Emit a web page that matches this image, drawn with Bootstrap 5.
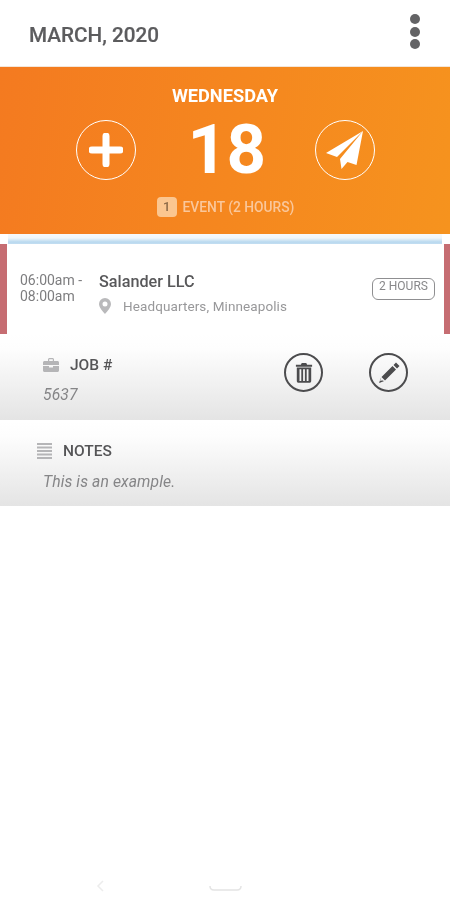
<!DOCTYPE html>
<html lang="en">
<head>
<meta charset="utf-8">
<title>March 2020</title>
<link rel="stylesheet" href="https://cdn.jsdelivr.net/npm/bootstrap@5.3.0/dist/css/bootstrap.min.css">
<style>
html,body{height:900px;overflow:hidden;background:#fff}
body{font-family:Roboto,"Liberation Sans",sans-serif;width:450px;filter:blur(.45px)}
.top-bar{height:67px;padding:0 29px 0 29px;border-bottom:1px solid #f3e6da}
.month{font-size:20.7px;font-weight:500;color:#5c5c5e;line-height:1;margin-top:4px;-webkit-text-stroke:.2px #5c5c5e}
.dots{width:12px;margin-top:0}
.dots i{display:block;width:10px;height:10px;border-radius:50%;background:#636365;margin:0 auto 2.700px}
.hero{height:167px;background:linear-gradient(100deg,#f47a20,#f6931e);color:#fff;padding-top:19px}
.weekday{font-size:18.2px;font-weight:700;line-height:20px}
.day-row{height:72px;margin-top:8px;padding-left:76px;padding-right:75px}
.round{width:60px;height:60px;border:1.5px solid #fff;border-radius:50%}
.daynum{font-size:69px;font-weight:700;line-height:72px;letter-spacing:-.5px;margin:-1px 0 0 2px}
.summary{margin-top:11px;padding-left:1px;gap:6px;font-size:13.800px;font-weight:500;color:#fac79b;line-height:20px}
.count{width:20px;height:20px;border-radius:4px;background:#fbc690;color:#8c6a48;font-size:13px}
.gap-strip{height:10px;background:linear-gradient(#f7f9fa 0,#f0f6fa 40%,#b9d9ef 80%,#c3def1 100%);margin:0 0 0 8px;width:434px}
.event{height:90px;border-left:7px solid #c66d72;border-right:6px solid #c66d72;color:#6f6f71}
.times{width:92px;padding:0 12px 0 13px;flex:none;font-size:14px;line-height:16px;color:#7d7d7f;margin-top:-3px}
.who{font-size:16.200px;font-weight:500;line-height:20px;color:#58585a;margin-bottom:4px}
.where{font-size:13.500px;color:#98989a;line-height:20px;gap:12px;letter-spacing:.1px}
.tag{flex:none;width:63px;height:22px;border:1.5px solid #8f8f91;border-radius:6px;font-size:12px;line-height:15px;color:#88888a;text-align:center;margin:-1px 9px 0 0}
.event-body{padding-top:9px}
.info{background:linear-gradient(#fff 0,#fdfdfd 18%,#e4e4e4 100%)}
.job{height:86px;padding:21px 0 0 43px;margin-bottom:1px}
.notes{height:85px;padding:20px 0 0 37px}
.label{font-size:15.500px;font-weight:500;line-height:20px;color:#555557;gap:11px}
.value{font-size:15.700px;font-style:italic;color:#858587;line-height:20px;letter-spacing:.1px}
.job .value{margin-top:10px}
.notes .value{margin:11px 0 0 6px}
.actions{gap:46px;margin:-2px 42px 0 0}
.tool{width:39px;height:39px;border:2px solid #4c4c4e;border-radius:50%}
.navhint{position:absolute;left:0;top:878px;width:450px;height:16px}
</style>
</head>
<body>
<header class="top-bar d-flex align-items-center justify-content-between">
  <div class="month">MARCH, 2020</div>
  <div class="dots"><i></i><i></i><i></i></div>
</header>
<section class="hero text-center">
  <div class="weekday">WEDNESDAY</div>
  <div class="day-row d-flex justify-content-between align-items-center">
    <div class="round d-flex align-items-center justify-content-center">
      <svg width="34" height="34" viewBox="0 0 34 34"><path d="M17 3v28M3 17h28" stroke="#fff" stroke-width="7" stroke-linecap="round"/></svg>
    </div>
    <div class="daynum">18</div>
    <div class="round d-flex align-items-center justify-content-center">
      <svg width="40" height="40" viewBox="0 0 40 40"><path d="M38 1 1 23l11 4L38 1Zm0 0L15 29l1.500 10 6-7 9 3L38 1Z" fill="#fff"/></svg>
    </div>
  </div>
  <div class="summary d-flex justify-content-center align-items-center">
    <span class="count d-flex align-items-center justify-content-center">1</span>
    <span>EVENT (2 HOURS)</span>
  </div>
</section>
<div class="gap-strip"></div>
<section class="event d-flex align-items-center">
  <div class="times">06:00am - 08:00am</div>
  <div class="flex-grow-1 event-body">
    <div class="who">Salander LLC</div>
    <div class="where d-flex align-items-center">
      <svg width="12" height="16" viewBox="0 0 12 16"><path fill-rule="evenodd" d="M6 0a6 6 0 0 1 6 6c0 3.500-4 7.500-6 10C4 13.500 0 9.500 0 6a6 6 0 0 1 6-6Zm0 3.500a2.500 2.500 0 1 0 0 5 2.500 2.500 0 0 0 0-5Z" fill="#b9b9bb"/></svg>
      <span>Headquarters, Minneapolis</span>
    </div>
  </div>
  <div class="tag">2 HOURS</div>
</section>
<section class="info job d-flex justify-content-between">
  <div>
    <div class="label d-flex align-items-center">
      <svg width="16" height="14" viewBox="0 0 16 14"><path fill-rule="evenodd" d="M5 3V1.500C5 .7 5.700 0 6.500 0h3c.8 0 1.500.7 1.500 1.500V3h3.500c.8 0 1.500.7 1.500 1.500V7H0V4.500C0 3.700.7 3 1.500 3H5Zm1.200 0h3.600V1.300H6.200V3ZM0 8h6v1.500h4V8h6v4.500c0 .8-.7 1.500-1.500 1.500h-13C.7 14 0 13.300 0 12.500V8Z" fill="#b5b5b7"/></svg>
      <span>JOB #</span>
    </div>
    <div class="value">5637</div>
  </div>
  <div class="actions d-flex">
    <div class="tool d-flex align-items-center justify-content-center">
      <svg width="18" height="21" viewBox="0 0 20 23"><path fill-rule="evenodd" d="M1 3h5.500L7.500 1h5l1 2H19v2H1V3Zm1 3h16v15c0 1-.8 2-2 2H4c-1.200 0-2-1-2-2V6Zm3 2v13h2V8H5Zm4 0v13h2V8H9Zm4 0v13h2V8h-2Z" fill="#4c4c4e"/></svg>
    </div>
    <div class="tool d-flex align-items-center justify-content-center">
      <svg width="24" height="24" viewBox="0 0 24 24"><path fill-rule="evenodd" d="M19 1.500l3.500 3.500-2.500 2.500L16.500 4 19 1.500ZM15.500 5 19 8.500 8 19.500 4.500 16 15.500 5ZM3.800 17.200l3 3L2 22l1.800-4.800Zm.2.200-.9 2.700 2.700-.9-1.800-1.800Z" fill="#4c4c4e"/></svg>
    </div>
  </div>
</section>
<section class="info notes">
  <div class="label d-flex align-items-center">
    <svg width="15" height="16" viewBox="0 0 15 16"><path d="M0 1h15M0 4.500h15M0 8h15M0 11.500h15M0 15h15" stroke="#b5b5b7" stroke-width="1.800"/></svg>
    <span>NOTES</span>
  </div>
  <div class="value">This is an example.</div>
</section>
<svg class="navhint" viewBox="0 0 450 16" aria-hidden="true"><path d="M103 3l-5 5 5 5" fill="none" stroke="#ececec" stroke-width="1.500"/><path d="M210 8c0 3 2 4 4 4h23c2 0 4-1 4-4" fill="none" stroke="#e4e4e4" stroke-width="1.500"/></svg>
</body>
</html>
